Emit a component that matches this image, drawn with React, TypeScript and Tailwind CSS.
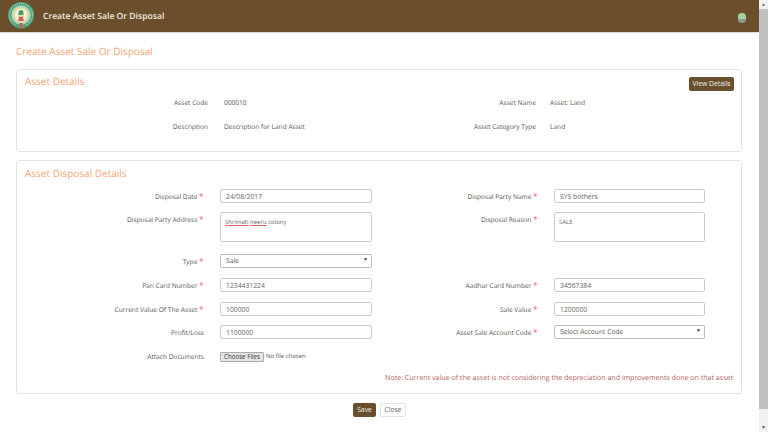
const font = "font-['Open_Sans','Liberation_Sans',sans-serif] [text-rendering:geometricPrecision]";

function Logo() {
  return (
    <svg width="28" height="30" viewBox="0 0 28 30" className="shrink-0">
      <circle cx="14" cy="14" r="13" fill="#4aa27a" />
      <circle cx="14" cy="14" r="11.5" fill="none" stroke="#dff0e4" strokeWidth="1" strokeDasharray="1 1" />
      <circle cx="14" cy="14" r="9.8" fill="#a9d8b4" />
      <circle cx="14" cy="14" r="7.8" fill="#efd9a6" />
      <circle cx="14" cy="14" r="6" fill="#f7f3dc" />
      <path d="M11.5 12a2.5 3 0 0 1 5 0v2h-5z" fill="#4c9a70" />
      <path d="M11 14.5h6v1.5h-6z" fill="#e3c978" />
      <path d="M12 16h4l.8 4h-5.6z" fill="#d0585f" />
      <path d="M7 25l4 2.5h6l4-2.5-2-1h-10z" fill="#49a57c" />
      <path d="M12.5 22h3v5h-3z" fill="#d0585f" />
    </svg>
  );
}

function Label({ text, required }: { text: string; required?: boolean }) {
  return (
    <label className="h-[14px] whitespace-nowrap text-right text-[6.6px] leading-[16px] text-[#555]">
      {text}
      {required && <span className="ml-[2px] mr-[0.5px] text-[7.5px] leading-[8px] text-[#ee5560]">*</span>}
    </label>
  );
}

function Input({ value }: { value: string }) {
  return (
    <input
      readOnly
      value={value}
      className="h-[14px] w-full rounded-[2px] border border-[#ccc] bg-white px-[5px] text-[6.8px] text-[#666] outline-none"
    />
  );
}

function Select({ value }: { value: string }) {
  return (
    <div className="flex h-[14px] w-full items-center justify-between rounded-[2px] border border-[#bbb] bg-white pl-[5px] pr-[3px] text-[6.7px] text-[#555]">
      <span>{value}</span>
      <span className="text-[5px] text-[#333]">▼</span>
    </div>
  );
}

function TextArea({ value, children }: { value?: string; children?: React.ReactNode }) {
  return (
    <div className="h-[30px] w-full rounded-[2px] border border-[#ccc] bg-white px-[4px] py-[4px] text-[6px] leading-[10px] text-[#666]">
      {children ?? value}
    </div>
  );
}

function Row({ children, className }: { children: React.ReactNode; className?: string }) {
  return (
    <div className={`grid grid-cols-[187px_152px_150px_151px] gap-x-[16px] ${className ?? ''}`}>
      {children}
    </div>
  );
}

export default function App() {
  return (
    <div className={`flex h-[432px] w-[768px] overflow-hidden bg-white ${font}`}>
      <div className="flex w-[759px] flex-col">
        <header className="flex h-[32px] items-center bg-[#6b4f2d] pl-[7px] pr-[13px] shadow-[0_1px_1px_#ddd]">
          <Logo />
          <h1 className="ml-[8px] text-[8.6px] font-semibold text-[#f0ebe0]">Create Asset Sale Or Disposal</h1>
          <div className="ml-auto mt-[4px] h-[10px] w-[8px] rounded-full bg-[linear-gradient(#9fd6a0_65%,#8a9a90_65%)]" />
        </header>

        <main className="flex flex-1 flex-col px-[16px]">
          <h2 className="mt-[12px] text-[10px] leading-[15px] text-[#f5a573]">Create Asset Sale Or Disposal</h2>

          <section className="mt-[10px] h-[83px] w-[726px] rounded-[3px] border border-[#e8e3e3] pl-[8px] pr-[7px] pt-[4px]">
            <div className="flex items-start justify-between">
              <h3 className="text-[10px] leading-[15px] text-[#f5a573]">Asset Details</h3>
              <button className="mt-[3px] h-[14px] w-[45px] rounded-[2px] bg-[#6b4f2d] text-[6.8px] text-[#eee]">View Details</button>
            </div>
            <div className="mt-[6px] grid grid-cols-[183px_49px_279px_1fr] text-[6.6px] leading-[12px] text-[#555]">
              <span className="text-right">Asset Code</span>
              <span className="pl-[16px]">000010</span>
              <span className="text-right">Asset Name</span>
              <span className="pl-[14px]">Asset: Land</span>
            </div>
            <div className="mt-[12px] grid grid-cols-[183px_49px_279px_1fr] text-[6.6px] leading-[12px] text-[#555]">
              <span className="text-right">Description</span>
              <span className="whitespace-nowrap pl-[16px]">Description for Land Asset</span>
              <span className="text-right">Asset Category Type</span>
              <span className="pl-[14px]">Land</span>
            </div>
          </section>

          <section className="mt-[8px] h-[234px] w-[726px] rounded-[3px] border border-[#e8e3e3] pt-[5px]">
            <h3 className="ml-[8px] text-[10px] leading-[15px] text-[#f5a573]">Asset Disposal Details</h3>
            <Row className="mt-[8px]">
              <Label text="Disposal Date" required />
              <Input value="24/08/2017" />
              <Label text="Disposal Party Name" required />
              <Input value="SYS bothers" />
            </Row>
            <Row className="mt-[9px]">
              <Label text="Disposal Party Address" required />
              <TextArea>
                <span className="underline decoration-[#e06060]">Shrimati</span>{' '}
                <span className="underline decoration-[#e06060]">neeru</span> colony
              </TextArea>
              <Label text="Disposal Reason" required />
              <TextArea value="SALE" />
            </Row>
            <Row className="mt-[12px]">
              <Label text="Type" required />
              <Select value="Sale" />
            </Row>
            <Row className="mt-[10px]">
              <Label text="Pan Card Number" required />
              <Input value="1234431224" />
              <Label text="Aadhar Card Number" required />
              <Input value="34567384" />
            </Row>
            <Row className="mt-[10px]">
              <Label text="Current Value Of The Asset" required />
              <Input value="100000" />
              <Label text="Sale Value" required />
              <Input value="1200000" />
            </Row>
            <Row className="mt-[9px]">
              <Label text="Profit/Loss" />
              <Input value="1100000" />
              <Label text="Asset Sale Account Code" required />
              <Select value="Select Account Code" />
            </Row>
            <Row className="mt-[10px]">
              <Label text="Attach Documents" />
              <div className="mt-[3px] flex items-start text-[6px] text-[#555]">
                <button className="h-[10px] w-[44px] whitespace-nowrap rounded-[1px] border border-[#aaa] bg-[#e6e6e6] text-[6.2px] leading-[8px] text-[#333]">Choose Files</button>
                <span className="ml-[2px] leading-[9px]">No file chosen</span>
              </div>
            </Row>
            <p className="mt-[9px] pr-[8px] text-right text-[7.07px] leading-[12px] text-[#b5605f]">
              Note: Current value of the asset is not considering the depreciation and improvements done on that asset
            </p>
          </section>

          <div className="mt-[9px] flex justify-center gap-[4px]">
            <button className="h-[14px] w-[23px] rounded-[2px] bg-[#6b4f2d] text-[6.8px] text-[#eee]">Save</button>
            <button className="h-[14px] w-[26px] rounded-[2px] border border-[#e5e5e5] bg-white text-[6.8px] text-[#666]">Close</button>
          </div>
        </main>
      </div>

      <div className="flex w-[9px] flex-col items-center bg-[#f1f1f1]">
        <span className="mt-[1px] h-[8px] text-[5px] leading-[8px] text-[#777]">▲</span>
        <div className="h-[400px] w-full bg-[#c1c1c1]" />
        <span className="mt-auto h-[8px] text-[5px] leading-[8px] text-[#555]">▼</span>
      </div>
    </div>
  );
}
